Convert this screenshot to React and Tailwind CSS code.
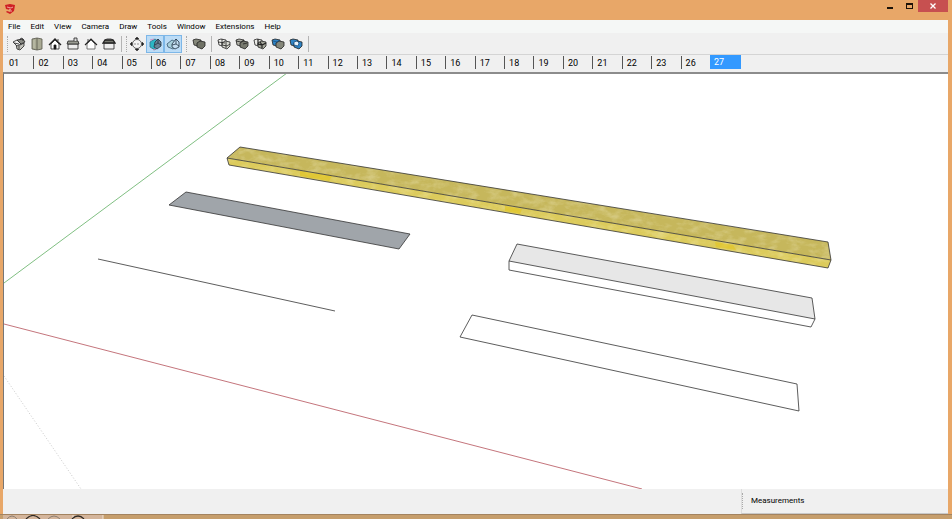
const menus = ['File', 'Edit', 'View', 'Camera', 'Draw', 'Tools', 'Window', 'Extensions', 'Help'];

const scenes = [
  '01', '02', '03', '04', '05', '06', '07', '08', '09', '10', '11', '12',
  '13', '14', '15', '16', '17', '18', '19', '20', '21', '22', '23', '26'
];

const viewIcons = {
  Iso: (
    <>
      <path d="M4 7l1 5 3 1 4-4V6L8 8z" fill="#c3c3bc" />
      <path d="M1 5l4-2 4 4-4 2z" fill="#eee" />
      <path d="M5 3l6-1 2 3-4 2z" fill="#8b8c86" />
      <path d="M8 3l1-2 2 1v2M7 9v3M2 6l5 1" />
    </>
  ),
  Top: (
    <>
      <path d="M2 2l5-1 5 1v10l-5 1-5-1z" fill="#a9aa94" stroke="#55564a" />
      <path d="M7 1v12" stroke="#55564a" />
      <path d="M4 3v8" stroke="#c9cab6" />
    </>
  ),
  Front: (
    <>
      <path d="M3 7v5h8V7L7 3z" fill="#fff" />
      <path d="M1 8l6-6 6 6" strokeWidth="1.4" />
      <path d="M6 8h2v4H6z" fill="#111" />
      <path d="M10 4V2" />
    </>
  ),
  Right: (
    <>
      <path d="M2 7h10v5H2z" fill="#eee" />
      <path d="M1 7l1-3h10l1 3z" fill="#999b92" />
      <path d="M8 4V1h3v3" fill="#ddd" />
    </>
  ),
  Back: (
    <>
      <path d="M3 7v5h8V7L7 3z" fill="#fff" stroke="#555" />
      <path d="M1 8l6-6 6 6" strokeWidth="1.1" />
      <path d="M4 5V2" />
    </>
  ),
  Left: (
    <>
      <path d="M2 6h10v6H2z" fill="#eee" />
      <path d="M1 6l2-3h8l2 3z" fill="#777970" strokeWidth="1.3" />
      <path d="M3 3l2-1h4l2 1" />
    </>
  )
};

const sectionIcons = {
  'Section Plane': (
    <>
      <circle cx="7" cy="7" r="4.5" fill="#f4f4f4" stroke="#444" />
      <path d="M7 0l2 2H5zM7 14l2-2H5zM0 7l2-2v4zM14 7l-2-2v4z" fill="#222" strokeWidth=".5" />
      <path d="M4 7h6" stroke="#777" strokeDasharray="2 1" />
    </>
  ),
  'Display Section Planes': (
    <>
      <path d="M2 5l5-3 3 2v6l-3 3-5-3z" fill="#2cb6c4" stroke="#39708a" />
      <path d="M7 5l3-3 3 3v4l-4 3-3-2z" fill="#6a8396" stroke="#234" />
      <path d="M10 2v4l3 2M7 8l3-2" stroke="#234" />
      <path d="M2 3l4-1M5 13l3-1" stroke="#d683b6" />
    </>
  ),
  'Display Section Cuts': (
    <>
      <path d="M1 7l5-4 4 2v5l-3 2-5-2z" fill="#a8d0dd" stroke="#37566d" />
      <path d="M6 7l4-5 3 3v5l-4 2-3-2z" fill="#c5dff2" stroke="#234" />
      <path d="M10 2v5l3 2M6 8l4-1" stroke="#234" />
    </>
  )
};

const Solid = ({ back, front }) => (
  <>
    <path d="M1 3l3-1 5 1v4l-3 2-4-1z" fill={back} />
    <path d="M5 6l3-2 5 1v4l-3 3-5-2z" fill={front} />
  </>
);

const solidIcons = {
  Intersect: (
    <>
      <Solid back="#f2f2ee" front="#d9dad2" />
      <path d="M1 5l7 1M5 2v6M5 8l5 1 3-2M9 5v6" />
    </>
  ),
  Union: (
    <>
      <Solid back="#b0b1a8" front="#77796e" />
      <path d="M1 4l5 1 3-2M8 7l4-1" />
    </>
  ),
  Subtract: (
    <>
      <Solid back="#ecece8" front="#a4a69a" />
      <path d="M5 7l4 1 4-2M9 8v3M5 2v6M7 5l2 3" strokeWidth="1.2" />
    </>
  ),
  Trim: (
    <>
      <Solid back="#2f83c4" front="#85877a" />
      <path d="M2 4l4 1 3-2" stroke="#1a5183" />
    </>
  ),
  Split: (
    <>
      <Solid back="#2f83c4" front="#2f83c4" />
      <path d="M5 5l3-1 2 2-1 3-4-1z" fill="#e9f3fa" stroke="#1a5183" />
    </>
  )
};

const Grip = () => (
  <span className="mx-px h-4 w-px border-l border-dotted border-[#aaa]" />
);

const Divider = () => <span className="mx-[3px] h-4 w-px bg-[#b4b4b4]" />;

const ToolButton = ({ label, active, children }) => (
  <button
    type="button"
    aria-label={label}
    aria-pressed={active}
    className={`flex h-[18px] w-[18px] shrink-0 items-center justify-center ${
      active ? 'border border-[#7db7e8] bg-[#bcdcf6]' : ''
    }`}
  >
    <svg viewBox="0 0 14 14" className="h-[14px] w-[14px] shrink-0" fill="none" stroke="#222" strokeWidth=".8">
      {children}
    </svg>
  </button>
);

const TitleBar = () => (
  <header className="flex h-5 items-start justify-between">
    <svg viewBox="0 0 10 10" className="mt-1 ml-[2px] h-[10px] w-[10px]">
      <path d="M0 1l5-1 5 1-1 6-4 3-4-2 1-1 3 1V6L1 5z" fill="#cf1f24" />
      <path d="M2 3l4 1 2-1M4 5l2 1V8" fill="none" stroke="#f6c9b8" strokeWidth=".8" />
    </svg>
    <div className="flex h-3">
      <button type="button" aria-label="Minimize" className="flex w-5 items-center justify-center">
        <span className="mt-[3px] h-[2px] w-[6px] bg-[#1c1208]" />
      </button>
      <button type="button" aria-label="Maximize" className="flex w-[18px] items-center justify-center">
        <span className="h-[6px] w-[7px] border border-t-2 border-[#1c1208]" />
      </button>
      <button type="button" aria-label="Close" className="flex w-[30px] items-center justify-center bg-[#c75050]">
        <svg viewBox="0 0 6 6" className="h-[6px] w-[6px]" stroke="#fff" strokeWidth="1.3">
          <path d="M.5.5l5 5M5.5.5l-5 5" />
        </svg>
      </button>
    </div>
  </header>
);

const Toolbar = () => (
  <div className="flex h-[22px] items-center border-b border-[#d4d4d4] pl-[3px]">
    <div className="flex items-center">
      <Grip />
      <span className="w-px" />
      {Object.entries(viewIcons).map(([label, icon]) => (
        <ToolButton key={label} label={label}>{icon}</ToolButton>
      ))}
      <Divider />
    </div>
    <div className="flex items-center">
      <Grip />
      {Object.entries(sectionIcons).map(([label, icon]) => (
        <ToolButton key={label} label={label} active={label.startsWith('Display')}>{icon}</ToolButton>
      ))}
    </div>
    <div className="ml-[3px] flex items-center">
      <Grip />
      <span className="w-[2px]" />
      <ToolButton label="Outer Shell">
        <Solid back="#85877a" front="#6f7165" />
      </ToolButton>
      <Divider />
      {Object.entries(solidIcons).map(([label, icon]) => (
        <ToolButton key={label} label={label}>{icon}</ToolButton>
      ))}
      <Divider />
    </div>
  </div>
);

const SceneTabs = () => (
  <div className="flex h-[17px] pl-px text-[9px] leading-[14px]">
    <div className="grid w-[706px] grid-cols-24">
      {scenes.map((scene, i) => (
        <button
          key={scene}
          type="button"
          className={`mt-px h-[13px] border-l pl-1 text-left ${i === 0 ? 'border-transparent' : 'border-[#555]'}`}
        >
          {scene}
        </button>
      ))}
    </div>
    <button type="button" className="h-[14px] w-[31px] bg-[#3399ff] pl-1 text-left leading-3 text-white">
      27
    </button>
  </div>
);

const Viewport = () => (
  <main className="flex min-h-0 flex-1 border-t-2 border-l border-t-[#8c8c8c] border-l-[#777] bg-white">
    <svg viewBox="4 74 944 415" preserveAspectRatio="xMinYMin slice" className="h-full w-full" fill="none" stroke="#333" strokeWidth=".8" strokeLinejoin="round">
      <defs>
        <filter id="grain" x="0" y="0" width="1" height="1">
          <feTurbulence type="fractalNoise" baseFrequency=".09 .16" numOctaves="4" seed="6" />
          <feColorMatrix values="0 0 0 0 .93  0 0 0 0 .89  0 0 0 0 .62  2.4 0 0 0 -1" />
          <feComposite in2="SourceGraphic" operator="in" />
        </filter>
      </defs>

      {/* Axes */}
      <path d="M4 283L287 73" stroke="#5fae62" />
      <path d="M4 324L642 489" stroke="#b5525a" />
      <path d="M4 376L81 489" stroke="#bbb" strokeDasharray="1 2" />

      {/* Timber beam */}
      <g stroke="none">
        <path d="M227 158L240 147L828 242L831 260z" fill="#c6b75c" />
        <path d="M227 158L831 260L828 268L229 165z" fill="#dccb5c" />
        <path d="M227 158L240 147L828 242L831 260L828 268L229 165z" fill="#fff" filter="url(#grain)" opacity=".3" />
        <path d="M300 171l32 5-3 5-29-5zM505 206l17 3-2 5-15-3zM715 242l18 3 3 5-20-3z" fill="#e3c51d" opacity=".6" />
      </g>
      <path d="M227 158L240 147L828 242L831 260L828 268L229 165zM227 158L831 260" />

      {/* Flat face */}
      <path d="M169 205L186 192L410 234L399 249z" fill="#a0a5aa" />

      {/* Single edge */}
      <path d="M98 259L335 311" />

      {/* Extruded face */}
      <path d="M509 261L517 244L812 298L815 319z" fill="#e7e7e7" stroke="none" />
      <path d="M509 261L517 244L812 298L815 319L811 327L509 270zM509 261L815 319" />

      {/* Outline */}
      <path d="M472 315L797 384L799 411L460 337z" />
    </svg>
  </main>
);

const StatusBar = () => (
  <footer className="flex h-[25px] items-stretch justify-end">
    <label htmlFor="measurements" className="flex w-[207px] items-center border-b border-l border-b-[#c8c8c8] border-l-[#ddd] text-[8px]">
      <span className="h-4 border-l border-dotted border-[#aaa] pl-2 leading-4">Measurements</span>
      <input id="measurements" className="ml-8 h-4 min-w-0 flex-1 bg-transparent outline-none" />
    </label>
  </footer>
);

const Taskbar = () => (
  <div className="h-[5px] border-t border-[#a38360] bg-[#c69e6c]">
    <svg viewBox="0 0 104 4" className="h-1 w-[104px]" fill="none">
      <path d="M3 0h100v4H3z" fill="#d4b59b" />
      <path d="M103 0v4M73 0v4" stroke="#eee0d0" />
      <path d="M7 4q5-6 10 0M48 4q6-6 12 0" stroke="#8b7e72" />
      <path d="M26 4q7-7 14 0M72 4q6-6 12 0" stroke="#2e2924" strokeWidth="1.2" />
    </svg>
  </div>
);

const App = () => (
  <div className="flex h-screen flex-col bg-[#e8a768] font-[Roboto,sans-serif] text-black">
    <div className="flex min-h-0 flex-1 flex-col pr-1 pl-[3px]">
      <TitleBar />
      <div className="flex min-h-0 flex-1 flex-col bg-[#f0f0f0]">
        <nav className="flex h-[13px] items-center gap-[10px] bg-[#f5f7f6] pl-[5px] text-[8px]">
          {menus.map((menu) => (
            <button key={menu} type="button">{menu}</button>
          ))}
        </nav>
        <Toolbar />
        <SceneTabs />
        <Viewport />
        <StatusBar />
      </div>
    </div>
    <Taskbar />
  </div>
);

export default App;
